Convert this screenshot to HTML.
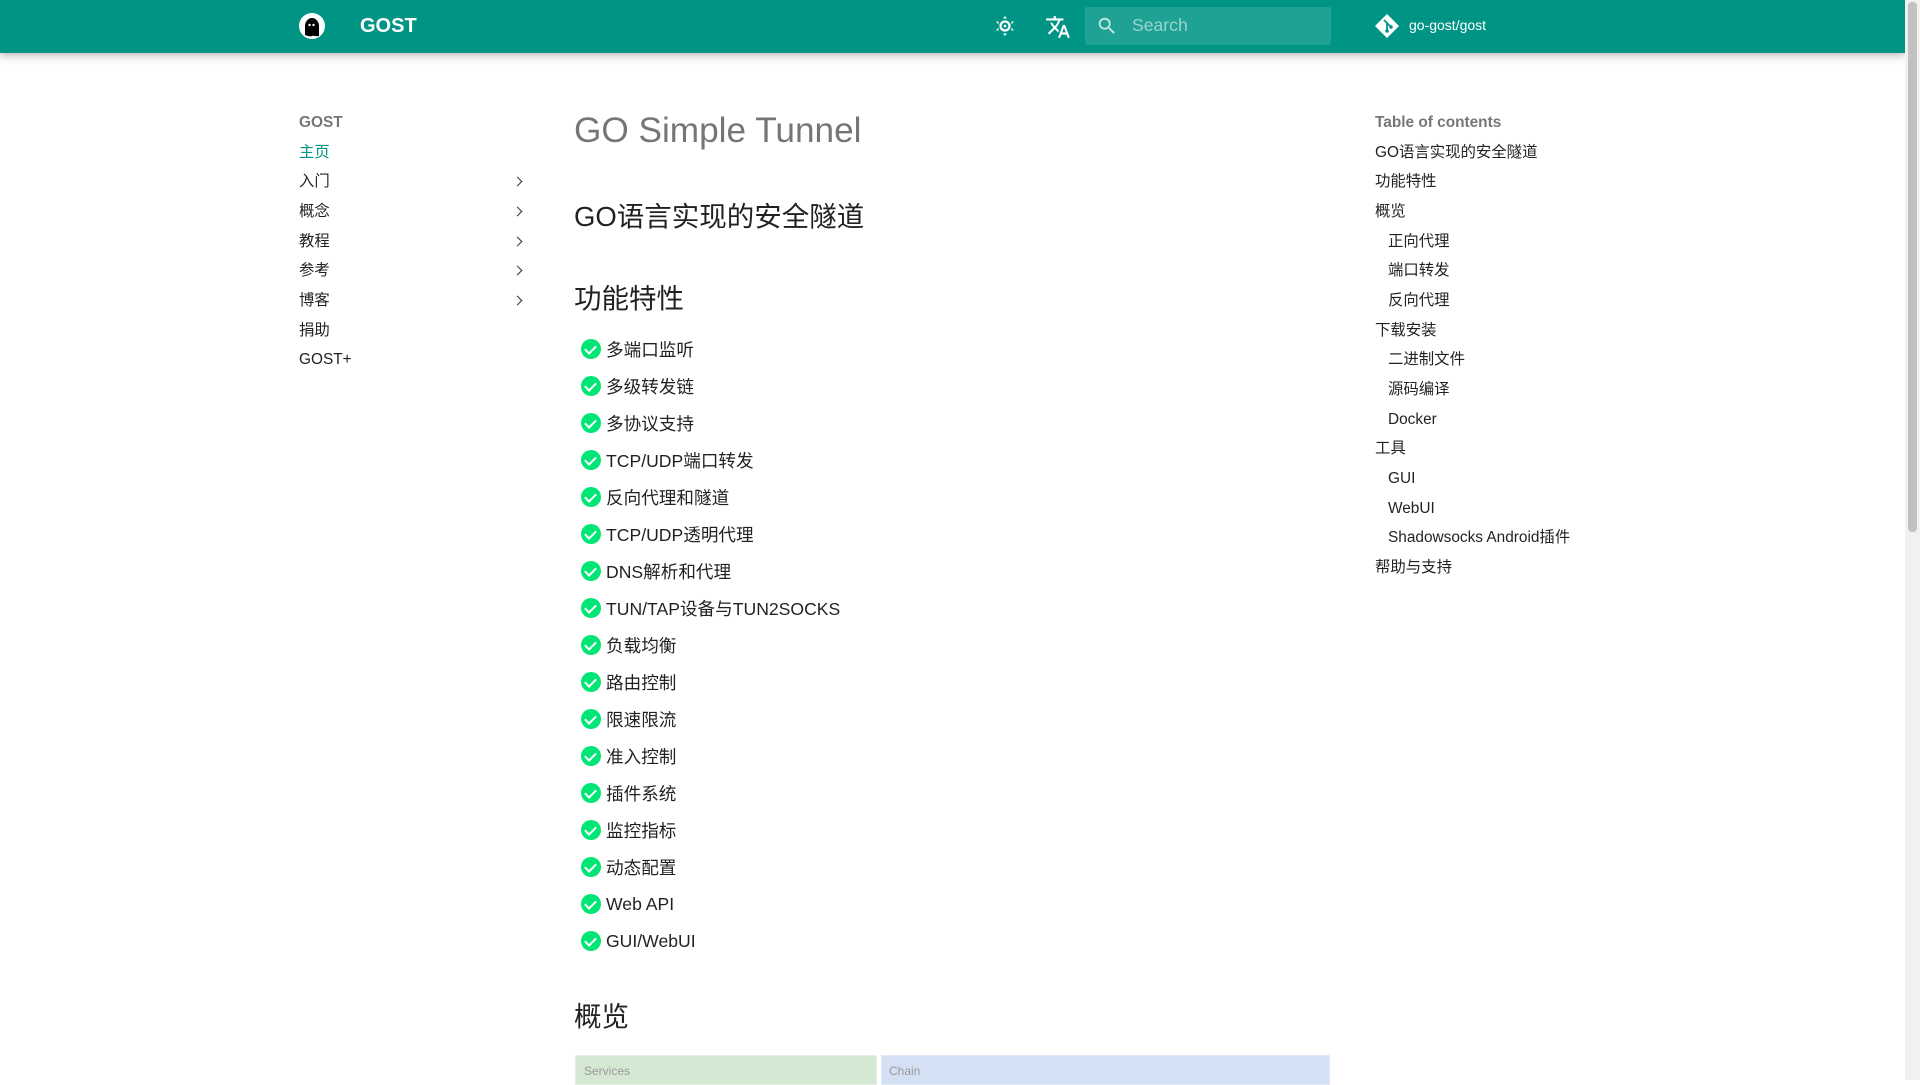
<!DOCTYPE html>
<html><head><meta charset="utf-8"><style>
*{margin:0;padding:0;box-sizing:border-box}
html,body{width:1920px;height:1080px;overflow:hidden;background:#fff;font-family:"Liberation Sans","Noto Sans CJK SC",sans-serif;color:rgba(0,0,0,.87)}
.hdr{position:absolute;left:0;top:0;width:1905px;height:53px;background:#009485;box-shadow:0 0 4px rgba(0,0,0,.1),0 4px 8px rgba(0,0,0,.2)}
.sb{position:absolute;left:1905px;top:0;width:15px;height:1080px;background:#f1f1f1}
.sb i{position:absolute;left:3px;top:2px;width:9px;height:530px;background:#c1c1c1;border-radius:4px}
.a{position:absolute;white-space:nowrap}
.t{font-size:20px;font-weight:700;color:#fff}
.search{position:absolute;left:1085px;top:7px;width:246px;height:38px;background:rgba(255,255,255,.12);border-radius:2px}
.nav{font-size:15.4px;line-height:20px}
.sec{font-weight:700;color:rgba(0,0,0,.54)}
.chev{position:absolute;left:514px;width:7px;height:7px;border-right:1.3px solid #333;border-top:1.3px solid #333;transform:rotate(45deg)}
h1{position:absolute;left:574px;top:111px;font-size:35.2px;font-weight:300;color:rgba(0,0,0,.54);white-space:nowrap}
.h2{position:absolute;left:574px;font-size:27.5px;font-weight:400;white-space:nowrap;line-height:36px}
.li{position:absolute;left:606px;font-size:17.6px;line-height:24px;white-space:nowrap}
.ck{position:absolute;left:581px;width:20px;height:20px;border-radius:50%;background:#00e676}
.ck:after{content:"";position:absolute;left:6px;top:4px;width:5px;height:9px;border-right:2px solid #fff;border-bottom:2px solid #fff;transform:rotate(45deg)}
</style></head><body>
<div class="hdr"></div>
<div class="sb"><i></i></div>
<svg class="a" style="left:299px;top:13px" width="26" height="26" viewBox="0 0 26 26"><circle cx="13" cy="13" r="13" fill="#fff"/><path d="M6 13a7 8 0 0 1 14 0v10c-3 1-5-1-7 0s-4 0-7-1z" fill="#000"/><circle cx="10.5" cy="12" r="1.2" fill="#fff"/><circle cx="14.5" cy="12" r="1.2" fill="#fff"/></svg>
<div class="a t" style="left:360px;top:15px">GOST</div>
<svg class="a" style="left:993px;top:14px" width="24" height="24" viewBox="0 0 24 24"><circle cx="12" cy="12" r="4.5" fill="none" stroke="#fff" stroke-width="2.2"/><circle cx="12" cy="12" r="1.3" fill="#fff"/><path fill="#fff" d="M12 2l2 2.5h-4zM12 22l-2-2.5h4zM3 7.5h2.5v3zM21 7.5h-2.5v3zM3 16.5h2.5v-3zM21 16.5h-2.5v-3z"/></svg>
<svg class="a" style="left:1045px;top:14px" width="26" height="26" viewBox="0 0 24 24"><path fill="#fff" d="m12.87 15.07-2.54-2.51.03-.03A17.5 17.5 0 0 0 14.07 6H17V4h-7V2H8v2H1v2h11.17C11.5 7.92 10.44 9.75 9 11.35 8.070 10.32 7.3 9.19 6.69 8h-2c.73 1.63 1.73 3.17 2.98 4.56l-5.09 5.02L4 19l5-5 3.11 3.11zM18.5 10h-2L12 22h2l1.12-3h4.75L21 22h2zm-2.62 7 1.62-4.330L19.12 17z"/></svg>
<div class="search"></div>
<svg class="a" style="left:1096px;top:15px" width="22" height="22" viewBox="0 0 24 24"><path fill="rgba(255,255,255,.75)" d="M9.5 3A6.5 6.5 0 0 1 16 9.5c0 1.61-.59 3.09-1.56 4.23l.27.27h.79l5 5-1.5 1.5-5-5v-.79l-.27-.27A6.52 6.52 0 0 1 9.5 16 6.5 6.5 0 0 1 3 9.5 6.5 6.5 0 0 1 9.5 3m0 2C7 5 5 7 5 9.5S7 14 9.5 14 14 12 14 9.5 12 5 9.5 5"/></svg>
<div class="a" style="left:1132px;top:15px;font-size:17.6px;color:rgba(255,255,255,.55)">Search</div>
<svg class="a" style="left:1374px;top:13px" width="26" height="26" viewBox="0 0 26 26"><path fill="#fff" d="M13 1 25 13 13 25 1 13z"/><path d="M10 7l3 3v8M13 10l4 4" stroke="#009485" stroke-width="1.8" fill="none"/><circle cx="13" cy="18" r="1.8" fill="#009485"/><circle cx="17" cy="14" r="1.8" fill="#009485"/></svg>
<div class="a" style="left:1409px;top:17px;font-size:14px;color:#fff">go-gost/gost</div>

<div class="a nav sec" style="left:299px;top:113px">GOST</div>
<div class="a nav" style="left:299px;top:143px;color:#009485">主页</div>
<div class="a nav" style="left:299px;top:172px">入门</div><div class="chev" style="top:178px"></div>
<div class="a nav" style="left:299px;top:202px">概念</div><div class="chev" style="top:208px"></div>
<div class="a nav" style="left:299px;top:232px">教程</div><div class="chev" style="top:238px"></div>
<div class="a nav" style="left:299px;top:261px">参考</div><div class="chev" style="top:267px"></div>
<div class="a nav" style="left:299px;top:291px">博客</div><div class="chev" style="top:297px"></div>
<div class="a nav" style="left:299px;top:321px">捐助</div>
<div class="a nav" style="left:299px;top:350px">GOST+</div>

<h1>GO Simple Tunnel</h1>
<div class="h2" style="top:199px">GO语言实现的安全隧道</div>
<div class="h2" style="top:281px">功能特性</div>
<div class="ck" style="top:339px"></div><div class="li" style="top:338px">多端口监听</div>
<div class="ck" style="top:376px"></div><div class="li" style="top:375px">多级转发链</div>
<div class="ck" style="top:413px"></div><div class="li" style="top:412px">多协议支持</div>
<div class="ck" style="top:450px"></div><div class="li" style="top:449px">TCP/UDP端口转发</div>
<div class="ck" style="top:487px"></div><div class="li" style="top:486px">反向代理和隧道</div>
<div class="ck" style="top:524px"></div><div class="li" style="top:523px">TCP/UDP透明代理</div>
<div class="ck" style="top:561px"></div><div class="li" style="top:560px">DNS解析和代理</div>
<div class="ck" style="top:598px"></div><div class="li" style="top:597px">TUN/TAP设备与TUN2SOCKS</div>
<div class="ck" style="top:635px"></div><div class="li" style="top:634px">负载均衡</div>
<div class="ck" style="top:672px"></div><div class="li" style="top:671px">路由控制</div>
<div class="ck" style="top:709px"></div><div class="li" style="top:708px">限速限流</div>
<div class="ck" style="top:746px"></div><div class="li" style="top:745px">准入控制</div>
<div class="ck" style="top:783px"></div><div class="li" style="top:782px">插件系统</div>
<div class="ck" style="top:820px"></div><div class="li" style="top:819px">监控指标</div>
<div class="ck" style="top:857px"></div><div class="li" style="top:856px">动态配置</div>
<div class="ck" style="top:894px"></div><div class="li" style="top:892px">Web API</div>
<div class="ck" style="top:931px"></div><div class="li" style="top:929px">GUI/WebUI</div>
<div class="h2" style="top:999px">概览</div>
<div class="a" style="left:575px;top:1055px;width:302px;height:30px;background:#d5e8d4;border:1px solid #e6efe4"><span style="position:absolute;left:8px;top:8px;font-size:12px;color:#999">Services</span></div>
<div class="a" style="left:881px;top:1055px;width:449px;height:30px;background:#d4e1f5;border:1px solid #e2eaf7"><span style="position:absolute;left:7px;top:8px;font-size:12px;color:#999">Chain</span></div>

<div class="a nav sec" style="left:1375px;top:113px">Table of contents</div>
<div class="a nav" style="left:1375px;top:143px">GO语言实现的安全隧道</div>
<div class="a nav" style="left:1375px;top:172px">功能特性</div>
<div class="a nav" style="left:1375px;top:202px">概览</div>
<div class="a nav" style="left:1388px;top:232px">正向代理</div>
<div class="a nav" style="left:1388px;top:261px">端口转发</div>
<div class="a nav" style="left:1388px;top:291px">反向代理</div>
<div class="a nav" style="left:1375px;top:321px">下载安装</div>
<div class="a nav" style="left:1388px;top:350px">二进制文件</div>
<div class="a nav" style="left:1388px;top:380px">源码编译</div>
<div class="a nav" style="left:1388px;top:410px">Docker</div>
<div class="a nav" style="left:1375px;top:439px">工具</div>
<div class="a nav" style="left:1388px;top:469px">GUI</div>
<div class="a nav" style="left:1388px;top:499px">WebUI</div>
<div class="a nav" style="left:1388px;top:528px">Shadowsocks Android插件</div>
<div class="a nav" style="left:1375px;top:558px">帮助与支持</div>
</body></html>
